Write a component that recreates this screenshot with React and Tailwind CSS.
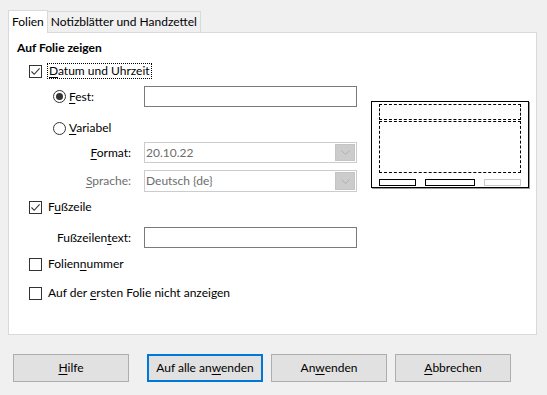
import React from 'react';

const font = { fontFamily: 'Lato, "Noto Sans", sans-serif' };

const CheckMark = () => (
  <svg width="11" height="11" viewBox="0 0 11 11" className="block">
    <path d="M1.5 5.5 L4.2 8.3 L9.6 2.4" fill="none" stroke="#333" strokeWidth="1.1" />
  </svg>
);

const Checkbox = ({ checked }) => (
  <div className="w-[13px] h-[13px] border border-[#333] bg-white flex items-center justify-center shrink-0">
    {checked && <CheckMark />}
  </div>
);

const Radio = ({ checked }) => (
  <div className="w-[13px] h-[13px] rounded-full border border-[#333] bg-white flex items-center justify-center shrink-0">
    {checked && <div className="w-[7px] h-[7px] rounded-full bg-[#333]" />}
  </div>
);

const U = ({ children }) => <span className="underline underline-offset-2">{children}</span>;

const Select = ({ value }) => (
  <div className="w-[213px] h-full border border-[#cccccc] bg-white flex items-stretch">
    <div className="flex-1 flex items-center pl-[1px] text-[#6d6d6d]">{value}</div>
    <div className="w-[20px] m-[1px] bg-[#cccccc] border border-[#c4c4c4] flex items-center justify-center">
      <svg width="9" height="5" viewBox="0 0 9 5">
        <path d="M0.5 0.5 L4.5 4.5 L8.5 0.5" fill="none" stroke="#b0b0b0" strokeWidth="1" />
      </svg>
    </div>
  </div>
);

const Button = ({ children, primary, className = '' }) => (
  <button
    className={`w-[116px] h-[28px] bg-[#e1e1e1] text-[12px] text-black ${
      primary ? 'border-2 border-[#0078d7]' : 'border border-[#adadad]'
    } ${className}`}
  >
    {children}
  </button>
);

const Preview = () => (
  <div className="w-[158px] h-[87px] bg-white border border-black shadow-[1px_1px_0_#9a9a9a] px-[7px] pt-[2px]">
    <div className="h-[16px] border border-dashed border-black" />
    <div className="h-[52px] mt-[1px] border border-dashed border-black" />
    <div className="mt-[6px] flex">
      <div className="w-[37px] h-[7px] border border-black" />
      <div className="w-[50px] h-[7px] border border-black ml-[9px]" />
      <div className="w-[37px] h-[7px] border border-[#c8c8c8] ml-[9px]" />
    </div>
  </div>
);

export default function App() {
  return (
    <div className="w-[547px] h-[395px] bg-[#f0f0f0] text-[12px] text-black" style={font}>
      <div className="pl-[8px] pt-[9px] flex items-end">
        <div className="h-[23px] px-[3px] bg-white border border-b-0 border-[#d9d9d9] flex items-center relative top-[1px] z-10">
          Folien
        </div>
        <div className="h-[21px] px-[3px] bg-[#f0f0f0] border border-l-0 border-b-0 border-[#d9d9d9] flex items-center">
          Notizblätter und Handzettel
        </div>
      </div>
      <div className="ml-[8px] w-[529px] h-[303px] bg-white border border-[#d9d9d9] flex">
        <div className="w-[349px] flex flex-col">
          <div className="mt-[7px] h-[16px] ml-[8px] font-bold flex items-center">Auf Folie zeigen</div>
          <div className="mt-[7px] h-[16px] ml-[20px] flex items-center">
            <Checkbox checked />
            <span className="ml-[5px] border border-dotted border-black px-[1px] leading-[14px]">
              <U>D</U>atum und Uhrzeit
            </span>
          </div>
          <div className="mt-[7px] h-[21px] flex items-center">
            <div className="ml-[44px] flex items-center w-[91px]">
              <Radio checked />
              <span className="ml-[3px]"><U>F</U>est:</span>
            </div>
            <div className="w-[213px] h-full border border-[#7a7a7a] bg-white" />
          </div>
          <div className="mt-[11px] h-[20px] ml-[44px] flex items-center">
            <Radio />
            <span className="ml-[3px]"><U>V</U>ariabel</span>
          </div>
          <div className="mt-[4px] h-[21px] flex items-center">
            <div className="w-[122px] text-right"><U>F</U>ormat:</div>
            <div className="ml-[13px] h-full"><Select value="20.10.22" /></div>
          </div>
          <div className="mt-[7px] h-[22px] flex items-center">
            <div className="w-[122px] text-right text-[#6d6d6d]"><U>S</U>prache:</div>
            <div className="ml-[13px] h-full"><Select value="Deutsch {de}" /></div>
          </div>
          <div className="mt-[7px] h-[16px] ml-[20px] flex items-center">
            <Checkbox checked />
            <span className="ml-[6px]">F<U>u</U>ßzeile</span>
          </div>
          <div className="mt-[12px] h-[21px] flex items-center">
            <div className="w-[122px] text-right">Fußzeilen<U>t</U>ext:</div>
            <div className="ml-[13px] w-[213px] h-full border border-[#7a7a7a] bg-white" />
          </div>
          <div className="mt-[8px] h-[16px] ml-[20px] flex items-center">
            <Checkbox />
            <span className="ml-[6px]">Folien<U>n</U>ummer</span>
          </div>
          <div className="mt-[13px] h-[16px] ml-[20px] flex items-center">
            <Checkbox />
            <span className="ml-[6px]">Auf der <U>e</U>rsten Folie nicht anzeigen</span>
          </div>
        </div>
        <div className="ml-[13px] mt-[68px]">
          <Preview />
        </div>
      </div>
      <div className="mt-[19px] pl-[13px] flex">
        <Button><U>H</U>ilfe</Button>
        <Button primary className="ml-[18px]">Auf alle an<U>w</U>enden</Button>
        <Button className="ml-[8px]">An<U>w</U>enden</Button>
        <Button className="ml-[8px]"><U>A</U>bbrechen</Button>
      </div>
    </div>
  );
}
